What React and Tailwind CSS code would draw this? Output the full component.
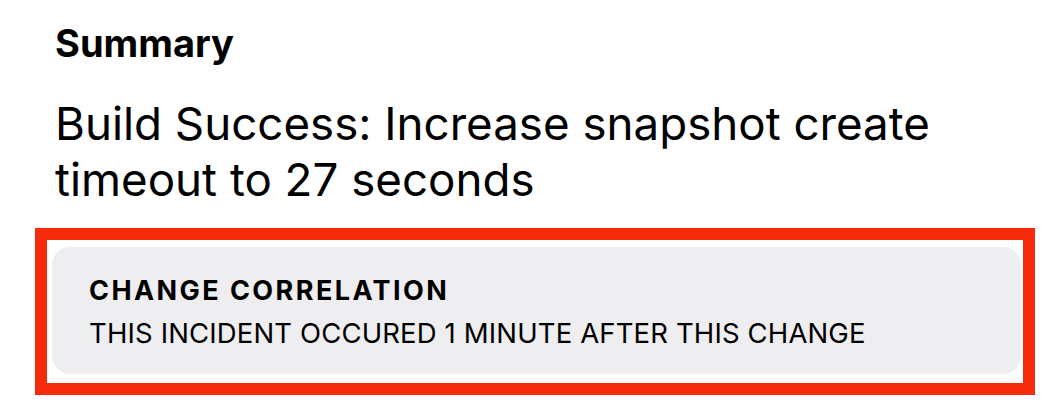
import React from "react";

function CorrelationCard() {
  return (
    <div className="mt-[20px] ml-[35px] w-[1000px] h-[167px] border-[12px] border-[#f62b0c] pt-[7px] pl-[5px] pr-[2px] pb-[9px]">
      <div className="h-full rounded-[18px] bg-[#eeeef0] pl-[37px] pt-[23px]">
        <p className="text-[27px] leading-[42px] font-bold tracking-[0.09em]">
          CHANGE CORRELATION
        </p>
        <p className="text-[27.5px] leading-[42px] tracking-[0.005em]">
          THIS INCIDENT OCCURED 1 MINUTE AFTER THIS CHANGE
        </p>
      </div>
    </div>
  );
}

export default function App() {
  return (
    <div className="w-[1045px] h-[404px] bg-white text-black overflow-hidden font-['Inter','Liberation_Sans',sans-serif]">
      <div className="pl-[55px] pt-[20px]">
        <h2 className="text-[38px] leading-[46px] font-bold">Summary</h2>
        <p className="mt-[30px] text-[45.7px] leading-[56px]">
          Build Success: Increase snapshot create
          <br />
          timeout to 27 seconds
        </p>
      </div>
      <CorrelationCard />
    </div>
  );
}
